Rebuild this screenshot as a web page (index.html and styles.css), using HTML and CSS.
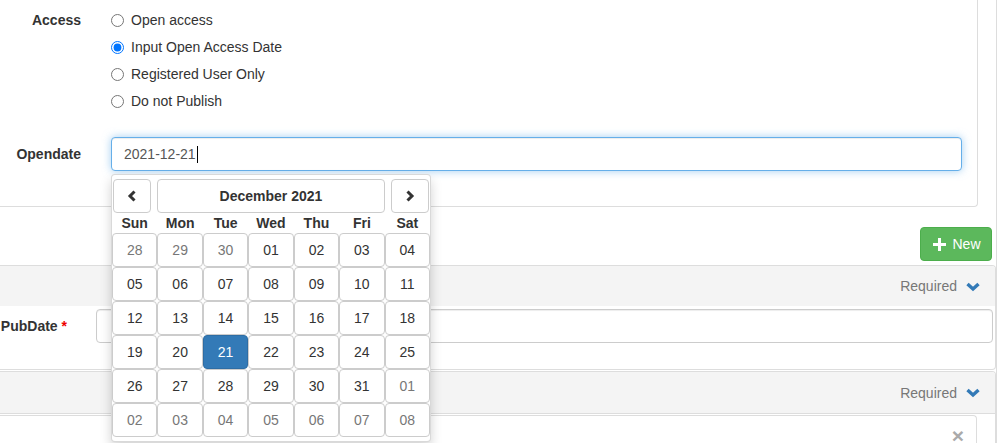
FILE: index.html
```html
<!DOCTYPE html>
<html>
<head>
<meta charset="utf-8">
<link rel="stylesheet" href="styles.css">
</head>
<body>
<div class="page">
  <div class="top-panel">
    <div class="form-row access-row">
      <div class="ctl-label">Access</div>
      <div class="radios">
        <label class="radio"><input type="radio" name="access"><span>Open access</span></label>
        <label class="radio"><input type="radio" name="access" checked><span>Input Open Access Date</span></label>
        <label class="radio"><input type="radio" name="access"><span>Registered User Only</span></label>
        <label class="radio"><input type="radio" name="access"><span>Do not Publish</span></label>
      </div>
    </div>
    <div class="form-row date-row">
      <div class="ctl-label mid">Opendate</div>
      <div class="control">
        <div class="input focus">2021-12-21<span class="caret-line"></span></div>
        <div class="datepicker">
          <div class="dp-head">
            <button class="dp-btn dp-prev"><svg width="12" height="14" viewBox="0 0 12 14"><polyline points="8.5,2.5 4,7 8.5,11.5" fill="none" stroke="#333" stroke-width="3"/></svg></button>
            <button class="dp-btn dp-month">December 2021</button>
            <button class="dp-btn dp-next"><svg width="12" height="14" viewBox="0 0 12 14"><polyline points="3.5,2.5 8,7 3.5,11.5" fill="none" stroke="#333" stroke-width="3"/></svg></button>
          </div>
          <div class="dp-names">
            <span>Sun</span><span>Mon</span><span>Tue</span><span>Wed</span><span>Thu</span><span>Fri</span><span>Sat</span>
          </div>
          <div class="dp-grid">
            <button class="day muted">28</button><button class="day muted">29</button><button class="day muted">30</button><button class="day">01</button><button class="day">02</button><button class="day">03</button><button class="day">04</button>
            <button class="day">05</button><button class="day">06</button><button class="day">07</button><button class="day">08</button><button class="day">09</button><button class="day">10</button><button class="day">11</button>
            <button class="day">12</button><button class="day">13</button><button class="day">14</button><button class="day">15</button><button class="day">16</button><button class="day">17</button><button class="day">18</button>
            <button class="day">19</button><button class="day">20</button><button class="day active">21</button><button class="day">22</button><button class="day">23</button><button class="day">24</button><button class="day">25</button>
            <button class="day">26</button><button class="day">27</button><button class="day">28</button><button class="day">29</button><button class="day">30</button><button class="day">31</button><button class="day muted">01</button>
            <button class="day muted">02</button><button class="day muted">03</button><button class="day muted">04</button><button class="day muted">05</button><button class="day muted">06</button><button class="day muted">07</button><button class="day muted">08</button>
          </div>
        </div>
      </div>
    </div>
  </div>

  <div class="toolbar">
    <button class="btn-new"><svg width="13" height="13" viewBox="0 0 13 13"><path d="M5 0h3v5h5v3H8v5H5V8H0V5h5z" fill="#fff"/></svg><span>New</span></button>
  </div>

  <div class="panel">
    <div class="panel-heading">
      <span class="req">Required</span>
      <svg class="chev" width="14" height="10" viewBox="0 0 14 10"><polyline points="1.5,2 7,7 12.5,2" fill="none" stroke="#337ab7" stroke-width="3.4"/></svg>
    </div>
    <div class="panel-body pub-row">
      <div class="ctl-label pub">PubDate <span class="star">*</span></div>
      <div class="input plain"></div>
    </div>
  </div>

  <div class="panel second">
    <div class="panel-heading bordered">
      <span class="req">Required</span>
      <svg class="chev" width="14" height="10" viewBox="0 0 14 10"><polyline points="1.5,2 7,7 12.5,2" fill="none" stroke="#337ab7" stroke-width="3.4"/></svg>
    </div>
    <div class="panel-body entry-wrap">
      <div class="entry"><span class="close">×</span></div>
    </div>
  </div>
</div>
</body>
</html>
```

FILE: styles.css
```css
* { box-sizing: border-box; }
html, body { margin: 0; padding: 0; background: #fff; }
body {
  font-family: "Liberation Sans", Arial, sans-serif;
  font-size: 14px;
  color: #333;
  overflow: hidden;
  height: 443px;
}
button { font-family: inherit; font-size: 14px; }

.page {
  width: 997px;
  border-right: 1px solid #ddd;
  min-height: 443px;
}

.top-panel {
  width: 978px;
  border-right: 1px solid #ddd;
  border-bottom: 1px solid #ddd;
  border-bottom-right-radius: 4px;
  padding: 7px 15px 35px 0;
}

.form-row {
  display: grid;
  grid-template-columns: 81px 1fr;
  column-gap: 30px;
}
.date-row { margin-top: 22px; align-items: center; }

.ctl-label {
  font-weight: bold;
  text-align: right;
  line-height: 27px;
  white-space: nowrap;
}

.radios { display: flex; flex-direction: column; }
.radio {
  display: flex;
  align-items: center;
  height: 27px;
  line-height: 27px;
}
.radio input {
  margin: 0 7px 0 0;
  width: 13px;
  height: 13px;
}

.control { position: relative; }

.input {
  height: 34px;
  border: 1px solid #ccc;
  border-radius: 4px;
  padding: 6px 12px;
  line-height: 20px;
  color: #555;
  background: #fff;
  box-shadow: inset 0 1px 1px rgba(0,0,0,.075);
}
.input.focus {
  border-color: #66afe9;
  box-shadow: inset 0 1px 1px rgba(0,0,0,.075), 0 0 8px rgba(102,175,233,.6);
  display: flex;
  align-items: center;
}
.caret-line {
  display: inline-block;
  width: 1px;
  height: 17px;
  background: #000;
  margin-left: 1px;
}

.datepicker {
  position: absolute;
  left: 0;
  top: 37px;
  width: 320px;
  background: #fff;
  border: 1px solid rgba(0,0,0,.15);
  border-radius: 4px;
  box-shadow: 0 6px 12px rgba(0,0,0,.175);
  padding: 4px 0 4px 0;
  z-index: 10;
}
.dp-head, .dp-names, .dp-grid {
  display: grid;
  grid-template-columns: repeat(7, 1fr);
  width: 318px;
}
.dp-btn {
  height: 34px;
  background: #fff;
  border: 1px solid #ccc;
  border-radius: 4px;
  color: #333;
  font-weight: bold;
  padding: 0;
  display: flex;
  align-items: center;
  justify-content: center;
}
.dp-prev { width: 38px; margin-left: 1px; }
.dp-month { grid-column: 2 / 7; }
.dp-next { width: 38px; justify-self: end; margin-right: 1px; }

.dp-names span {
  height: 20px;
  line-height: 20px;
  text-align: center;
  font-weight: bold;
  color: #333;
}

.day {
  height: 34px;
  background: #fff;
  border: 1px solid #ccc;
  border-radius: 4px;
  color: #333;
  padding: 0;
}
.day.muted { color: #777; }
.day.active {
  background: #337ab7;
  border-color: #2e6da4;
  color: #fff;
}

.toolbar {
  display: flex;
  justify-content: flex-end;
  padding: 20px 4px 4px 0;
}
.btn-new {
  height: 34px;
  width: 72px;
  background: #5cb85c;
  border: 1px solid #4cae4c;
  border-radius: 4px;
  color: #fff;
  display: flex;
  align-items: center;
  justify-content: center;
  gap: 6px;
  padding: 0 0 0 2px;
}
.btn-new span { font-size: 14px; }

.panel {
  border: 1px solid #ddd;
  border-left: none;
  border-radius: 0 4px 4px 0;
  background: #fff;
}
.panel.second { margin-top: 1px; }
.panel-heading {
  background: #f4f4f4;
  height: 40px;
  display: flex;
  align-items: center;
  justify-content: flex-end;
  padding-right: 15px;
  border-top-right-radius: 3px;
}
.panel-heading.bordered { border-bottom: 1px solid #ddd; height: 42px; }
.req { color: #777; margin-right: 9px; }
.chev { display: block; margin-top: 1px; }

.pub-row {
  display: grid;
  grid-template-columns: 67px 1fr;
  column-gap: 29px;
  align-items: center;
  padding: 3px 2px 26px 0;
}
.ctl-label.pub { line-height: 20px; }
.star { color: #e00; }

.entry-wrap { padding: 1px 18px 0 0; }
.entry {
  height: 40px;
  border: 1px solid #ddd;
  border-left: none;
  border-bottom: none;
  border-top-right-radius: 4px;
  display: flex;
  justify-content: flex-end;
  align-items: flex-start;
  padding: 10px 12px 0 0;
}
.close {
  color: #aaa;
  font-size: 21px;
  font-weight: bold;
  line-height: 20px;
}
```
